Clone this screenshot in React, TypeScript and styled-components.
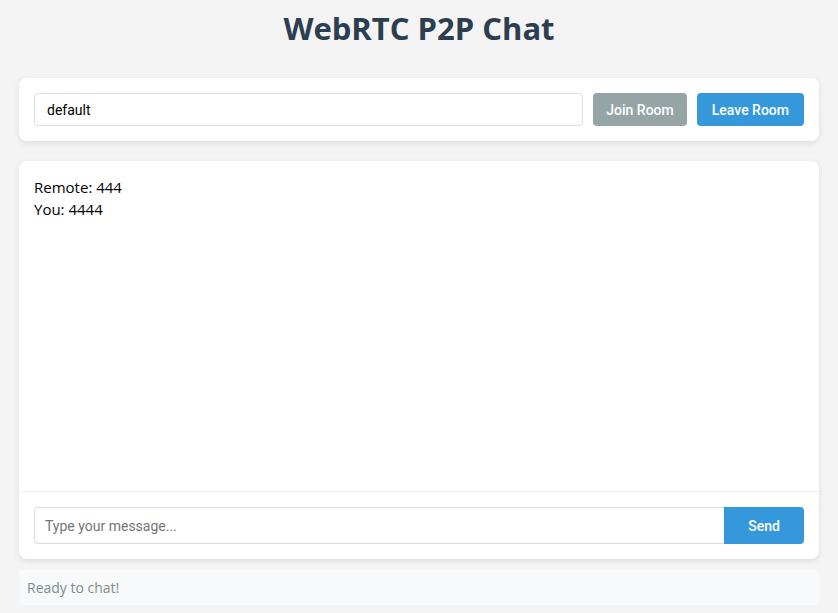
import { FC, useState } from "react";
import styled, { createGlobalStyle } from "styled-components";

const GlobalStyle = createGlobalStyle`
  html, body {
    margin: 0;
    padding: 0;
    background: #f4f4f4;
  }
  body {
    font-family: "Open Sans", "Noto Sans", sans-serif;
    color: #111;
  }
  * {
    box-sizing: border-box;
  }
`;

interface IMessage {
  from: string;
  text: string;
}

const messages: IMessage[] = [
  { from: "Remote", text: "444" },
  { from: "You", text: "4444" },
];

const App: FC = () => {
  const [room, setRoom] = useState("default");
  const [draft, setDraft] = useState("");

  return (
    <>
      <GlobalStyle />
      <Page>
        <Title>WebRTC P2P Chat</Title>

        <Card>
          <RoomBar>
            <TextInput value={room} onChange={(e) => setRoom(e.target.value)} />
            <Button disabled>Join Room</Button>
            <Button>Leave Room</Button>
          </RoomBar>
        </Card>

        <ChatCard>
          <Messages>
            {messages.map((m, i) => (
              <Message key={i}>
                {m.from}: {m.text}
              </Message>
            ))}
          </Messages>
          <Composer>
            <MessageInput
              placeholder="Type your message..."
              value={draft}
              onChange={(e) => setDraft(e.target.value)}
            />
            <SendButton>Send</SendButton>
          </Composer>
        </ChatCard>

        <Status>Ready to chat!</Status>
      </Page>
    </>
  );
};

export default App;

const Page = styled.div`
  max-width: 800px;
  margin: 0 auto;
  padding: 0 0 8px;
`;

const Title = styled.h1`
  margin: 0;
  padding: 8px 0 30px;
  text-align: center;
  font-size: 31px;
  line-height: 40px;
  font-weight: 700;
  color: #2c3e50;
`;

const Card = styled.div`
  background: #ffffff;
  border-radius: 8px;
  box-shadow: 0 2px 6px rgba(0, 0, 0, 0.1);
  margin-bottom: 20px;
`;

const RoomBar = styled.div`
  display: flex;
  gap: 10px;
  padding: 15px;
`;

const TextInput = styled.input`
  flex: 1;
  height: 33px;
  padding: 0 12px;
  border: 1px solid #dddddd;
  border-radius: 4px;
  font-family: Roboto, "Liberation Sans", sans-serif;
  font-size: 14px;
  color: #000;
  outline: none;
`;

const Button = styled.button`
  height: 33px;
  padding: 0 15px;
  border: none;
  border-radius: 4px;
  background: #3498db;
  color: #ffffff;
  font-family: Roboto, "Liberation Sans", sans-serif;
  font-size: 14px;
  font-weight: 500;
  cursor: pointer;

  &:disabled {
    padding: 0 13px;
    background: #95a5a6;
    cursor: default;
  }
`;

const ChatCard = styled(Card)`
  display: flex;
  flex-direction: column;
  height: 398px;
  margin-bottom: 11px;
`;

const Messages = styled.div`
  flex: 1;
  padding: 15px;
  overflow-y: auto;
  border-bottom: 1px solid #eeeeee;
`;

const Message = styled.div`
  font-size: 15px;
  line-height: 22px;
  color: #000;
`;

const Composer = styled.div`
  display: flex;
  padding: 15px;
`;

const MessageInput = styled.input`
  flex: 1;
  height: 37px;
  padding: 0 10px;
  border: 1px solid #dddddd;
  border-right: none;
  border-radius: 4px 0 0 4px;
  font-family: Roboto, "Liberation Sans", sans-serif;
  font-size: 14px;
  outline: none;

  &::placeholder {
    color: #757575;
  }
`;

const SendButton = styled.button`
  width: 80px;
  height: 37px;
  border: none;
  border-radius: 0 4px 4px 0;
  background: #3498db;
  color: #ffffff;
  font-family: Roboto, "Liberation Sans", sans-serif;
  font-size: 14px;
  font-weight: 500;
  cursor: pointer;
`;

const Status = styled.div`
  height: 35px;
  padding: 0 8px;
  display: flex;
  align-items: center;
  background: #f8f9fa;
  border-radius: 4px;
  color: #7f8c8d;
  font-size: 14px;
`;
